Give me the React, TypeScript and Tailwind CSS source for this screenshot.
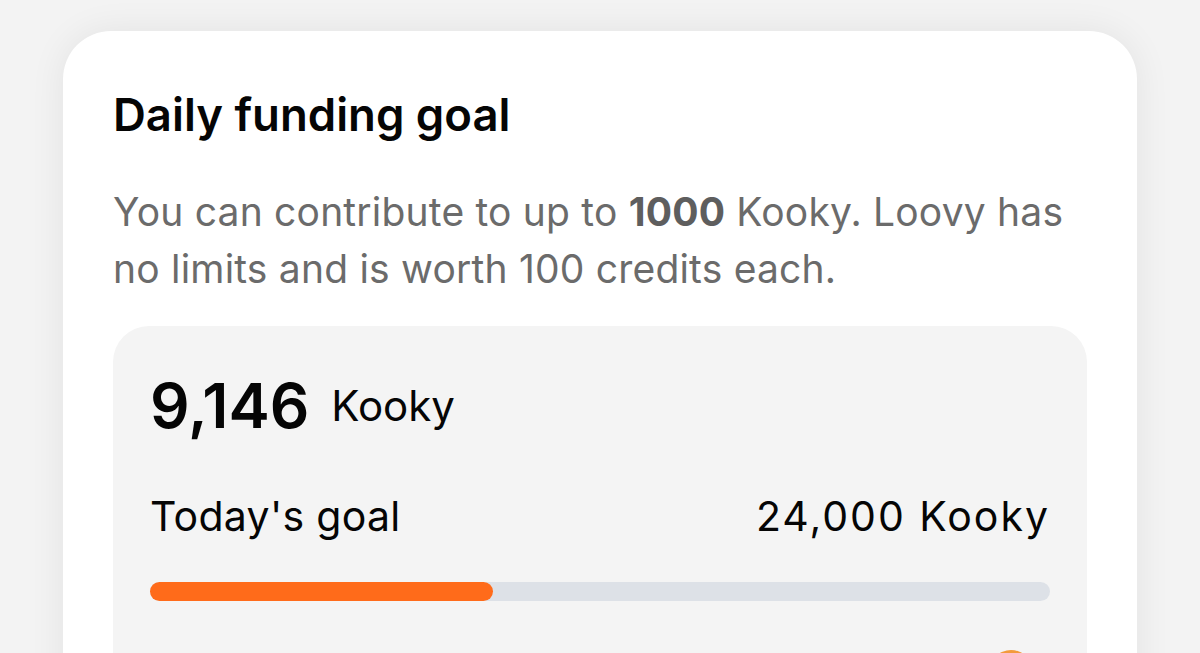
export default function App() {
  const current = 9146;
  const goal = 24000;
  const pct = (current / goal) * 100;

  return (
    <div className="h-[653px] w-[1200px] overflow-hidden bg-[#f3f3f3] px-[63px] pt-[31px] font-['Inter',sans-serif]">
      <div className="h-[700px] rounded-[48px] bg-white px-[50px] pt-[56px] shadow-[0_0_36px_rgba(0,0,0,0.07)]">
        <h2 className="text-[45.5px] font-semibold leading-[56px] text-[#050505]">
          Daily funding goal
        </h2>
        <p className="mt-[40px] text-[39px] leading-[57px] tracking-[0.2px] text-[#6b6b6b]">
          You can contribute to up to <span className="font-bold text-[#5e5e5e]">1000</span> Kooky. Loovy has no
          limits and is worth 100 credits each.
        </p>
        <div className="mt-[29px] h-[400px] rounded-[36px] bg-[#f4f4f4] px-[37px] pt-[44px]">
          <div className="flex items-center gap-[22px] text-[#050505]">
            <span className="text-[62px] font-semibold leading-[72px]">9,146</span>
            <span className="text-[42px] leading-[48px]">Kooky</span>
          </div>
          <div className="mt-[50px] flex items-baseline justify-between text-[41px] leading-[48px] text-[#050505]">
            <span className="tracking-[0.3px]">Today's goal</span>
            <span className="tracking-[2px]">24,000 Kooky</span>
          </div>
          <div className="mt-[42px] h-[19px] w-full rounded-full bg-[#dde1e7]">
            <div className="h-full rounded-full bg-[#ff6b1a]" style={{ width: `${pct}%` }} />
          </div>
          <div className="mt-[49px] flex justify-end pr-[17px]">
            <div className="h-[44px] w-[44px] rounded-full bg-[#f39a3c]" />
          </div>
        </div>
      </div>
    </div>
  );
}
